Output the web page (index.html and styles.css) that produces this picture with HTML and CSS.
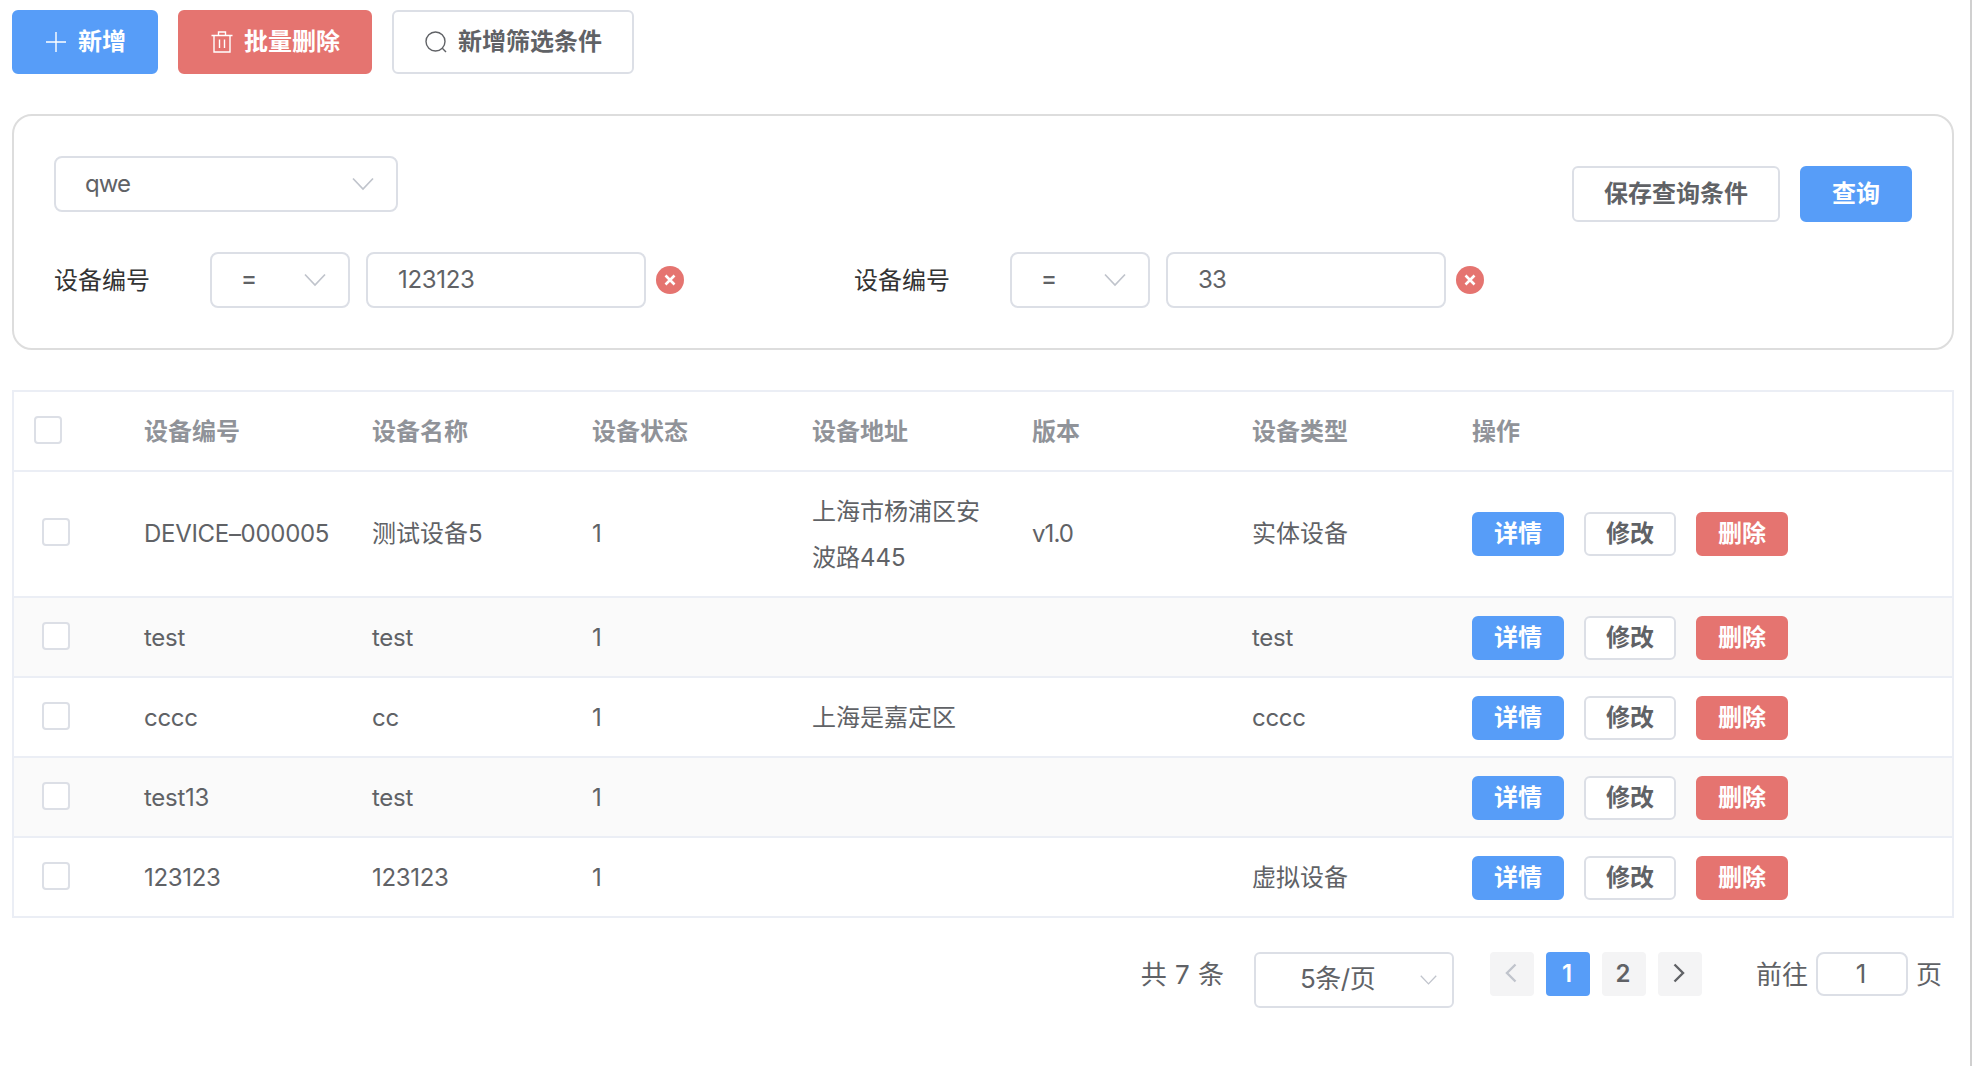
FILE: index.html
```html
<!DOCTYPE html>
<html lang="zh-CN">
<head>
  <meta charset="UTF-8">
  <title>设备管理</title>
  <link rel="stylesheet" href="styles.css">
</head>
<body>

  <div class="toolbar">
    <button class="btn btn-primary">
      <svg class="icon" viewBox="0 0 24 24"><path d="M12 2v20M2 12h20"/></svg>
      <span>新增</span>
    </button>
    <button class="btn btn-danger">
      <svg class="icon" viewBox="0 0 24 24"><path d="M1.500 5.500h21M8.500 5.500V2h7v3.500M4 5.500v16.500h16V5.500M9.500 9.500v8.500M14.500 9.500v8.500"/></svg>
      <span>批量删除</span>
    </button>
    <button class="btn">
      <svg class="icon" viewBox="0 0 24 24"><circle cx="11.500" cy="11.500" r="9.500"/><path d="M18.300 18.300l3.700 3.700"/></svg>
      <span>新增筛选条件</span>
    </button>
  </div>

  <div class="filter">
    <div class="filter-top">
      <div class="select select-scheme">
        <span class="en tight">qwe</span>
        <svg class="arrow" viewBox="0 0 22 14"><path d="M1 1.500l10 10.500 10-10.500"/></svg>
      </div>
      <div class="filter-actions">
        <button class="btn btn-medium">保存查询条件</button>
        <button class="btn btn-medium btn-primary">查询</button>
      </div>
    </div>
    <div class="filter-list">
      <div class="filter-item">
        <label>设备编号</label>
        <div class="select select-op">
          <span>=</span>
          <svg class="arrow" viewBox="0 0 22 14"><path d="M1 1.500l10 10.500 10-10.500"/></svg>
        </div>
        <input class="input en" type="text" value="123123">
        <svg class="remove" viewBox="0 0 28 28"><circle cx="14" cy="14" r="14"/><path d="M9.500 9.500l9 9M18.500 9.500l-9 9"/></svg>
      </div>
      <div class="filter-item">
        <label>设备编号</label>
        <div class="select select-op">
          <span>=</span>
          <svg class="arrow" viewBox="0 0 22 14"><path d="M1 1.500l10 10.500 10-10.500"/></svg>
        </div>
        <input class="input en tight" type="text" value="33">
        <svg class="remove" viewBox="0 0 28 28"><circle cx="14" cy="14" r="14"/><path d="M9.500 9.500l9 9M18.500 9.500l-9 9"/></svg>
      </div>
    </div>
  </div>

  <div class="table">
    <div class="row head">
      <div class="cell check"><span class="checkbox"></span></div>
      <div class="cell">设备编号</div>
      <div class="cell">设备名称</div>
      <div class="cell">设备状态</div>
      <div class="cell">设备地址</div>
      <div class="cell">版本</div>
      <div class="cell">设备类型</div>
      <div class="cell">操作</div>
    </div>
    <div class="row tall">
      <div class="cell check"><span class="checkbox"></span></div>
      <div class="cell en">DEVICE–000005</div>
      <div class="cell">测试设备5</div>
      <div class="cell">1</div>
      <div class="cell address">上海市杨浦区安波路445</div>
      <div class="cell en tight">v1.0</div>
      <div class="cell">实体设备</div>
      <div class="cell ops">
        <button class="btn btn-small btn-primary">详情</button>
        <button class="btn btn-small">修改</button>
        <button class="btn btn-small btn-danger">删除</button>
      </div>
    </div>
    <div class="row striped">
      <div class="cell check"><span class="checkbox"></span></div>
      <div class="cell en">test</div>
      <div class="cell en">test</div>
      <div class="cell">1</div>
      <div class="cell"></div>
      <div class="cell"></div>
      <div class="cell en">test</div>
      <div class="cell ops">
        <button class="btn btn-small btn-primary">详情</button>
        <button class="btn btn-small">修改</button>
        <button class="btn btn-small btn-danger">删除</button>
      </div>
    </div>
    <div class="row">
      <div class="cell check"><span class="checkbox"></span></div>
      <div class="cell en">cccc</div>
      <div class="cell en">cc</div>
      <div class="cell">1</div>
      <div class="cell">上海是嘉定区</div>
      <div class="cell"></div>
      <div class="cell en">cccc</div>
      <div class="cell ops">
        <button class="btn btn-small btn-primary">详情</button>
        <button class="btn btn-small">修改</button>
        <button class="btn btn-small btn-danger">删除</button>
      </div>
    </div>
    <div class="row striped">
      <div class="cell check"><span class="checkbox"></span></div>
      <div class="cell en">test13</div>
      <div class="cell en">test</div>
      <div class="cell">1</div>
      <div class="cell"></div>
      <div class="cell"></div>
      <div class="cell"></div>
      <div class="cell ops">
        <button class="btn btn-small btn-primary">详情</button>
        <button class="btn btn-small">修改</button>
        <button class="btn btn-small btn-danger">删除</button>
      </div>
    </div>
    <div class="row">
      <div class="cell check"><span class="checkbox"></span></div>
      <div class="cell en">123123</div>
      <div class="cell en">123123</div>
      <div class="cell">1</div>
      <div class="cell"></div>
      <div class="cell"></div>
      <div class="cell">虚拟设备</div>
      <div class="cell ops">
        <button class="btn btn-small btn-primary">详情</button>
        <button class="btn btn-small">修改</button>
        <button class="btn btn-small btn-danger">删除</button>
      </div>
    </div>
  </div>

  <div class="pagination">
    <span class="total">共 7 条</span>
    <div class="select select-size">
      <span>5条/页</span>
      <svg class="arrow" viewBox="0 0 22 14"><path d="M1 1.500l10 10.500 10-10.500"/></svg>
    </div>
    <div class="pager">
      <button class="page disabled"><svg viewBox="0 0 12 20"><path d="M10.500 1.500L2 10l8.500 8.500"/></svg></button>
      <button class="page active">1</button>
      <button class="page">2</button>
      <button class="page"><svg viewBox="0 0 12 20"><path d="M1.500 1.500L10 10l-8.500 8.500"/></svg></button>
    </div>
    <div class="jump">
      <span>前往</span>
      <input class="jump-input" type="text" value="1">
      <span>页</span>
    </div>
  </div>

</body>
</html>
```

FILE: styles.css
```css
* {
  box-sizing: border-box;
}

body {
  margin: 0;
  height: 1066px;
  padding: 10px 16px 0 12px;
  border-right: 2px solid #d0d0d0;
  background-color: #fff;
  font-family: Inter, "Noto Sans CJK SC", sans-serif;
  font-size: 24px;
  color: #606266;
  overflow: hidden;
}

button, input {
  font-family: inherit;
  color: inherit;
  margin: 0;
}

.en {
  letter-spacing: -0.3px;
}

.en.tight {
  letter-spacing: -0.9px;
}

.toolbar {
  display: flex;
  gap: 20px;
}

.btn {
  display: flex;
  align-items: center;
  justify-content: center;
  height: 64px;
  padding: 0 30px;
  border: 2px solid #dcdfe6;
  border-radius: 6px;
  background-color: #fff;
  font-size: 24px;
  font-weight: 600;
  line-height: 24px;
  white-space: nowrap;
}

.btn-primary {
  background-color: #579df8;
  border-color: #579df8;
  color: #fff;
}

.btn-danger {
  background-color: #e57470;
  border-color: #e57470;
  color: #fff;
}

.btn-medium {
  height: 56px;
}

.btn-small {
  width: 92px;
  height: 44px;
  padding: 0;
}

.icon {
  width: 24px;
  height: 24px;
  margin-right: 10px;
  fill: none;
  stroke: currentColor;
  stroke-width: 1.4;
}

.filter {
  height: 236px;
  margin-top: 40px;
  padding: 40px 40px 0;
  border: 2px solid #ddd;
  border-radius: 20px;
}

.filter-top {
  display: flex;
  justify-content: space-between;
  height: 96px;
}

.filter-actions {
  display: flex;
  gap: 20px;
  padding-top: 10px;
}

.select {
  display: flex;
  align-items: center;
  justify-content: space-between;
  height: 56px;
  padding: 0 22px 0 29px;
  border: 2px solid #dcdfe6;
  border-radius: 8px;
}

.select span {
  padding-bottom: 2px;
}

.arrow {
  width: 22px;
  height: 14px;
  fill: none;
  stroke: #c0c4cc;
  stroke-width: 1.7;
}

.select-scheme {
  width: 344px;
}

.select-op {
  width: 140px;
  margin-right: 16px;
}

.select-op span {
  padding-bottom: 4px;
  font-weight: 500;
}

.filter-list {
  display: flex;
}

.filter-item {
  display: flex;
  align-items: center;
  width: 800px;
}

.filter-item label {
  width: 156px;
  padding-bottom: 4px;
  color: #333;
}

.input {
  width: 280px;
  height: 56px;
  padding: 0 30px 1px;
  border: 2px solid #dcdfe6;
  border-radius: 8px;
  font-size: 24px;
}

.remove {
  width: 28px;
  height: 28px;
  margin-left: 10px;
  fill: #e57470;
  stroke: #fff;
  stroke-width: 2.6;
}

.remove circle {
  stroke: none;
}

.table {
  margin-top: 40px;
  border: 2px solid #ebeef5;
  border-bottom: none;
}

.row {
  display: grid;
  grid-template-columns: 110px 228px repeat(5, 220px) 500px;
  align-items: center;
  min-height: 80px;
  border-bottom: 2px solid #ebeef5;
}

.striped {
  background-color: #fafafa;
}

.head {
  color: #909399;
  font-weight: 600;
}

.cell {
  padding: 17px 20px 15px;
  line-height: 46px;
}

.tall .cell {
  padding-top: 16px;
  padding-bottom: 16px;
}

.tall .address {
  padding-top: 17px;
  padding-bottom: 15px;
}

.cell.check {
  display: flex;
  padding: 0 0 2px 28px;
}

.tall .check {
  padding-bottom: 4px;
}

.head .check {
  padding-left: 20px;
}

.checkbox {
  width: 28px;
  height: 28px;
  border: 2px solid #dcdfe6;
  border-radius: 4px;
  background-color: #fff;
}

.ops {
  display: flex;
  gap: 20px;
}

.pagination {
  display: flex;
  justify-content: flex-end;
  align-items: flex-start;
  margin-top: 34px;
  padding-right: 12px;
  font-size: 26px;
  line-height: 44px;
}

.total {
  padding-top: 1px;
  margin-right: 30px;
  word-spacing: 1px;
}

.select-size {
  width: 200px;
  padding: 0 15px 0 44px;
  border-radius: 6px;
}

.select-size span {
  letter-spacing: -0.5px;
}

.select-size .arrow {
  width: 17px;
  height: 12px;
}

.pager {
  display: flex;
  gap: 12px;
  margin: 0 54px 0 36px;
}

.page {
  display: flex;
  align-items: center;
  justify-content: center;
  width: 44px;
  height: 44px;
  padding: 0 2px 2px 0;
  border: none;
  border-radius: 4px;
  background-color: #f4f4f5;
  font-size: 24px;
  font-weight: 600;
}

.page svg {
  width: 12px;
  height: 20px;
  fill: none;
  stroke: currentColor;
  stroke-width: 2.4;
}

.page.disabled {
  color: #c0c4cc;
}

.page.active {
  background-color: #579df8;
  color: #fff;
}

.jump {
  display: flex;
}

.jump span {
  padding-top: 1px;
}

.jump-input {
  width: 92px;
  height: 44px;
  margin: 0 8px;
  padding: 0 8px 2px 6px;
  border: 2px solid #dcdfe6;
  border-radius: 8px;
  font-size: 26px;
  text-align: center;
}
```
